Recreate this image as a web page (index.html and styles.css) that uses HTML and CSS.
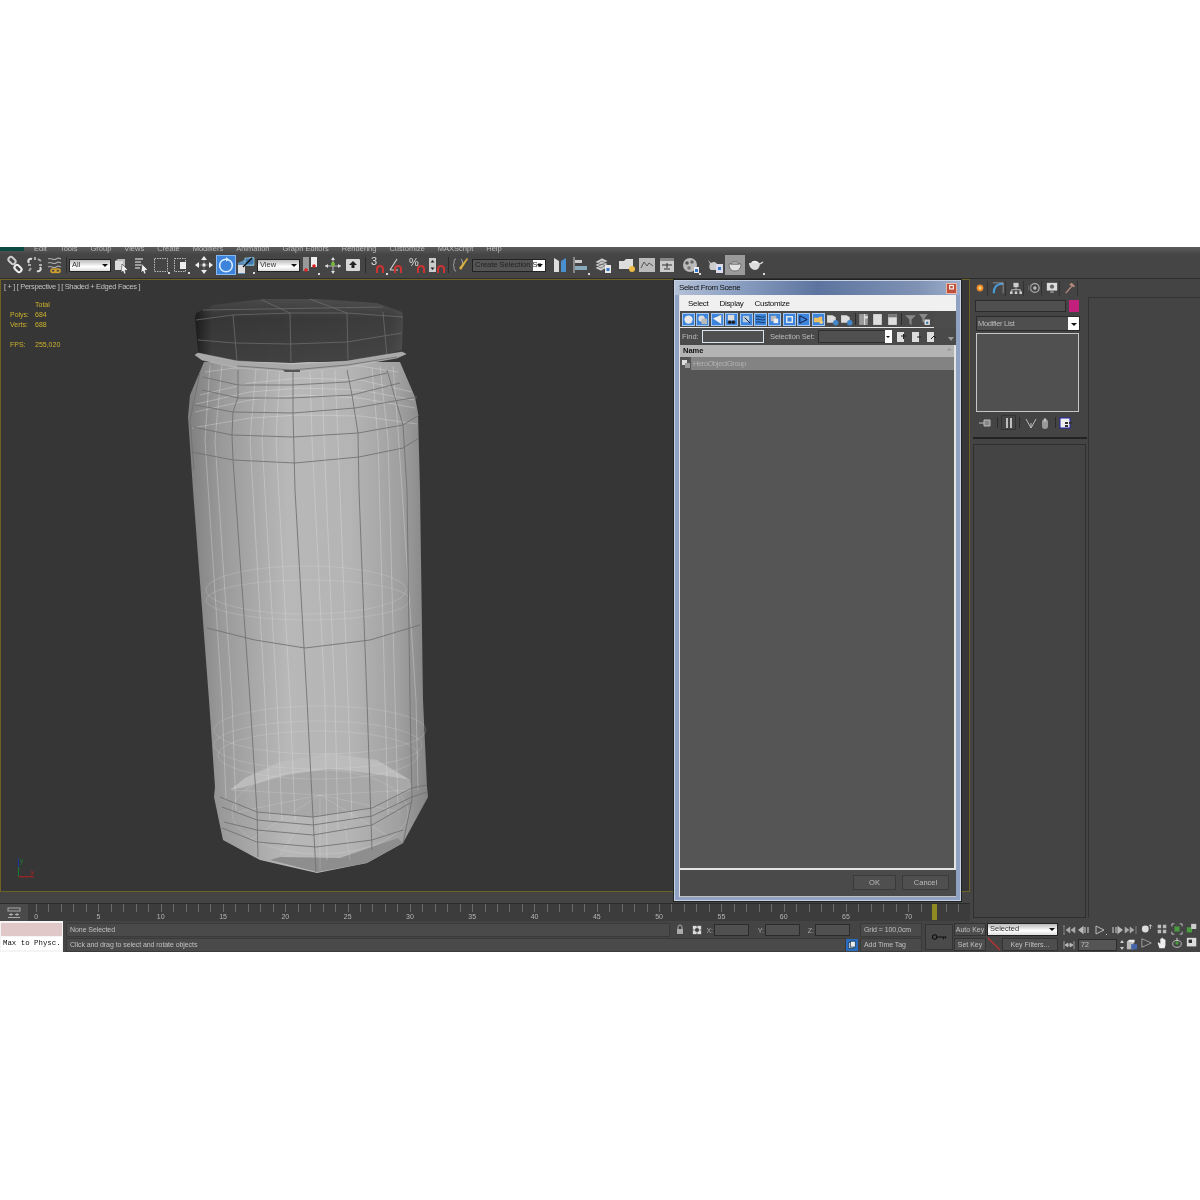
FILE: index.html
```html
<!DOCTYPE html>
<html lang="en">
<head>
<meta charset="utf-8">
<title>Select From Scene</title>
<link rel="stylesheet" href="styles.css">
</head>
<body>
<div class="app">
  <div class="menubar">
    <div class="logo"></div>
    <span>Edit</span><span>Tools</span><span>Group</span><span>Views</span><span>Create</span><span>Modifiers</span><span>Animation</span><span>Graph Editors</span><span>Rendering</span><span>Customize</span><span>MAXScript</span><span>Help</span>
  </div>

  <div class="toolbar">
    <i class="ti"><svg viewBox="0 0 20 20"><g fill="none" stroke="#ccc" stroke-width="2"><rect x="3" y="3" width="8" height="5" rx="2.5" transform="rotate(45 7 5.5)"/><rect x="9" y="11" width="8" height="5" rx="2.5" transform="rotate(45 13 13.5)" stroke="#eee"/></g></svg></i>
    <i class="ti"><svg viewBox="0 0 20 20"><g fill="none" stroke="#aaa" stroke-width="2"><path d="M4 8c-2-3 1-5 3-4M15 12c2 3-1 5-3 4" stroke="#ddd"/><path d="M6 13l-2 3M13 4l3 2M10 2v3M17 10h-3M3 10h3"/></g></svg></i>
    <i class="ti"><svg viewBox="0 0 20 20"><g fill="none" stroke="#aaa" stroke-width="1.2"><path d="M3 4c3-2 5 2 8 0s3-1 5 0M3 8c3-2 5 2 8 0s3-1 5 0M3 12c3-2 5 2 8 0s3-1 5 0"/></g><g fill="none" stroke="#d0a030" stroke-width="1.6"><rect x="6" y="14" width="5" height="3.4" rx="1.7"/><rect x="10" y="14" width="5" height="3.4" rx="1.7"/></g></svg></i>
    <div class="tsep tsep-a"></div>
    <div class="drop drop-all"><span>All</span><b></b></div>
    <i class="ti"><svg viewBox="0 0 20 20"><path d="M4 6l3-2h7v9l-2 2H4z" fill="#bbb"/><path d="M4 6h8v9H4z" fill="#ddd"/><path d="M11 9l6 6-3 .4 1 3-2 .6-1-3-2 2z" fill="#eee" stroke="#222" stroke-width=".5"/></svg></i>
    <i class="ti"><svg viewBox="0 0 20 20"><path d="M4 4h8M4 7h6M4 10h8M4 13h5" stroke="#bbb" stroke-width="1.6"/><path d="M11 9l6 6-3 .4 1 3-2 .6-1-3-2 2z" fill="#eee" stroke="#222" stroke-width=".5"/></svg></i>
    <i class="ti"><svg viewBox="0 0 20 20"><rect x="3.5" y="3.5" width="13" height="13" fill="none" stroke="#bbb" stroke-dasharray="1.5 1"/><path d="M17 17h2v2h-2z" fill="#ddd"/></svg></i>
    <i class="ti"><svg viewBox="0 0 20 20"><rect x="3.5" y="3.5" width="11" height="13" fill="none" stroke="#bbb" stroke-dasharray="1.5 1"/><path d="M9 7h6v7H9z" fill="#eee"/><path d="M17 17h2v2h-2z" fill="#ddd"/></svg></i>
    <div class="tgap3"></div>
    <i class="ti"><svg viewBox="0 0 20 20"><path d="M10 3v14M3 10h14" stroke="#777"/><path d="M10 1l3 4H7zM10 19l3-4H7zM1 10l4-3v6zM19 10l-4-3v6z" fill="#eee"/><rect x="8.5" y="8.5" width="3" height="3" fill="#eee"/></svg></i>
    <div class="tgap2"></div>
    <i class="ti ti-on"><svg viewBox="0 0 20 20"><circle cx="10" cy="10.5" r="6.3" fill="none" stroke="#d9ecff" stroke-width="1.6"/><path d="M10 2l3 2.4-3 2.2z" fill="#d9ecff"/></svg></i>
    <i class="ti"><svg viewBox="0 0 20 20"><path d="M2 8L14 2h4v9H9v8H2z" fill="#5b8db8"/><rect x="2" y="10" width="7" height="8" fill="#ddd"/><rect x="9" y="3" width="9" height="7" fill="#3d78b0" stroke="#cfe" stroke-width=".5"/><path d="M7 12l9-9" stroke="#111" stroke-width="1.4"/><path d="M17 17h2v2h-2z" fill="#ddd"/></svg></i>
    <div class="drop drop-view"><span>View</span><b></b></div>
    <i class="ti"><svg viewBox="0 0 20 20"><rect x="3" y="2" width="6" height="14" fill="#999"/><rect x="11" y="2" width="6" height="10" fill="#eee"/><circle cx="6" cy="15" r="1.8" fill="#d22"/><circle cx="14" cy="11" r="1.8" fill="#d22"/><path d="M18 18h2v2h-2z" fill="#ddd"/></svg></i>
    <div class="tgap3"></div>
    <i class="ti"><svg viewBox="0 0 20 20"><path d="M10 3v14M2 11h16" stroke="#bbb"/><path d="M10 2l2 3H8zM10 19l2-3H8zM2 11l3-2v4zM18 11l-3-2v4z" fill="#ddd"/><circle cx="10" cy="9" r="2" fill="#7b3"/></svg></i>
    <i class="ti"><svg viewBox="0 0 20 20"><rect x="3" y="4" width="14" height="12" rx="1" fill="#d8d8d8"/><path d="M10 6l4 4h-2.5v3h-3v-3H6z" fill="#222"/></svg></i>
    <div class="tsep tsep-b"></div>
    <i class="ti"><svg viewBox="0 0 20 20"><text x="3" y="10" class="svgnum">3</text><path d="M9 18v-4a3 3 0 0 1 6 0v4" fill="none" stroke="#c33" stroke-width="2"/><path d="M18 18h2v2h-2z" fill="#ddd"/></svg></i>
    <i class="ti"><svg viewBox="0 0 20 20"><path d="M2 15L9 4M2 15h8" stroke="#ccc" stroke-width="1.2" fill="none"/><path d="M7 18v-4a3 3 0 0 1 6 0v4" fill="none" stroke="#c33" stroke-width="2"/></svg></i>
    <i class="ti"><svg viewBox="0 0 20 20"><text x="1" y="11" class="svgnum">%</text><path d="M10 18v-4a3 3 0 0 1 6 0v4" fill="none" stroke="#c33" stroke-width="2"/></svg></i>
    <i class="ti"><svg viewBox="0 0 20 20"><rect x="1" y="3" width="7" height="14" fill="#ccc"/><path d="M4.500 5l2 2.500h-4zM4.500 15l2-2.500h-4z" fill="#222"/><path d="M10 18v-4a3 3 0 0 1 6 0v4" fill="none" stroke="#c33" stroke-width="2"/></svg></i>
    <div class="tsep tsep-c"></div>
    <i class="ti"><svg viewBox="0 0 20 20"><path d="M6 4C3 4 5 9 3 10c2 1 0 6 3 6M11 4c2 1 1 5 2 6" fill="none" stroke="#aaa"/><path d="M9 13l8-10 1 1-7 11z" fill="#d8b040"/></svg></i>
    <div class="drop drop-set"><span>Create Selection Se</span><b></b></div>
    <div class="tgap4"></div>
    <i class="ti"><svg viewBox="0 0 20 20"><path d="M4 3l5 3v11H4z" fill="#ddd"/><path d="M16 3l-5 3v11h5z" fill="#4a8fd0"/></svg></i>
    <i class="ti"><svg viewBox="0 0 20 20"><path d="M4 2v16" stroke="#ccc"/><rect x="5" y="5" width="7" height="3" fill="#ccc"/><rect x="5" y="11" width="12" height="4" fill="#8ab"/><path d="M18 18h2v2h-2z" fill="#ddd"/></svg></i>
    <div class="tgap3"></div>
    <i class="ti"><svg viewBox="0 0 20 20"><path d="M2 7l7-4 6 3-7 4zM2 10l7-4 6 3-7 4zM2 13l7-4 6 3-7 4z" fill="#ccc" stroke="#333" stroke-width=".5"/><rect x="12" y="10" width="6" height="8" fill="#e8e8e8"/><rect x="13.500" y="13" width="3" height="3" fill="#37c"/></svg></i>
    <div class="tgap4"></div>
    <i class="ti"><svg viewBox="0 0 20 20"><path d="M2 6h5l2-2h7v10H2z" fill="#ddd"/><circle cx="15" cy="14" r="3" fill="#eebb44"/></svg></i>
    <i class="ti"><svg viewBox="0 0 20 20"><rect x="2" y="3" width="16" height="14" fill="#bbb"/><path d="M4 13l3-6 3 4 2-3 4 3" fill="none" stroke="#555"/></svg></i>
    <i class="ti"><svg viewBox="0 0 20 20"><rect x="3" y="3" width="14" height="14" fill="#ccc"/><rect x="3" y="3" width="14" height="3" fill="#888"/><path d="M5 10h10M10 8v5M7 14h6" stroke="#333"/></svg></i>
    <div class="tgap4"></div>
    <i class="ti"><svg viewBox="0 0 20 20"><circle cx="9" cy="10" r="7" fill="#bbb"/><circle cx="6" cy="8" r="1.800" fill="#555"/><circle cx="11" cy="7" r="1.800" fill="#666"/><circle cx="8" cy="13" r="1.800" fill="#777"/><rect x="13" y="12" width="5" height="6" fill="#eee"/><rect x="14" y="14" width="3" height="3" fill="#37c"/><path d="M18 18h2v2h-2z" fill="#ddd"/></svg></i>
    <div class="tgap4"></div>
    <i class="ti"><svg viewBox="0 0 20 20"><path d="M3 5l3 3c3-2 5-1 6 1v6H6C4 14 4 10 5 9z" fill="#ccc"/><rect x="11" y="9" width="7" height="9" fill="#dde"/><rect x="13" y="12" width="3" height="3" fill="#37c"/></svg></i>
    <i class="ti ti-lit"><svg viewBox="0 0 20 20"><path d="M4 9h12c0 4-2 7-6 7s-6-3-6-7z" fill="#e2e2e2" stroke="#555" stroke-width=".7"/><path d="M6 9c1-3 7-3 8 0z" fill="#ccc" stroke="#555" stroke-width=".7"/></svg></i>
    <i class="ti"><svg viewBox="0 0 20 20"><path d="M4 8h11c0 4-2 7-5 7s-6-3-6-7z" fill="#ddd"/><path d="M6 8c1-3 6-3 8 0z" fill="#eee"/><path d="M15 9l3-2" stroke="#ddd" stroke-width="1.500"/><path d="M18 18h2v2h-2z" fill="#ddd"/></svg></i>
  </div>

  <div class="workspace">
    <div class="leftcol">
      <div class="viewport">
        <svg class="scene" viewBox="0 279 970 612">
          <defs>
            <linearGradient id="bodyfill" gradientUnits="userSpaceOnUse" x1="188" y1="0" x2="428" y2="0">
              <stop offset="0" stop-color="#7f7f7f"/><stop offset=".14" stop-color="#9a9a9a"/><stop offset=".42" stop-color="#b8b8b8"/><stop offset=".68" stop-color="#b4b4b4"/><stop offset=".88" stop-color="#a0a0a0"/><stop offset="1" stop-color="#858585"/>
            </linearGradient>
            <linearGradient id="lidfill" x1="0" y1="0" x2="0" y2="1">
              <stop offset="0" stop-color="#4f4f4f"/><stop offset=".3" stop-color="#3c3c3c"/><stop offset="1" stop-color="#454545"/>
            </linearGradient>
            <linearGradient id="lidside" x1="0" y1="0" x2="1" y2="0">
              <stop offset="0" stop-color="#000" stop-opacity=".55"/><stop offset=".08" stop-color="#000" stop-opacity=".1"/><stop offset=".9" stop-color="#000" stop-opacity="0"/><stop offset="1" stop-color="#fff" stop-opacity=".06"/>
            </linearGradient>
          </defs>
          <polygon class="body" points="204,362 190,395 188,417 193,490 209,700 215,787 214,797 223,840 260,860 317,873 367,863 403,843 428,797 427,787 423,700 420,490 418,413 415,397 400,362"/>
          <polygon fill="#bcbcbc" points="230,790 245,778 280,762 328,753 377,760 410,780 367,773 328,769 287,775 245,787"/>
          <polygon fill="#a8a8a8" points="245,787 287,775 328,769 367,773 410,780 412,790 372,808 313,817 257,812"/>
          <polygon fill="#8e8e8e" points="270,860 317,872 367,863 403,843 398,838 340,858 280,857"/>
          <g class="wl">
            <polyline points="210,365 205,440 222,700 226,800"/><polyline points="222,365 215,440 232,700 236,810"/><polyline points="256,368 250,440 265,700 270,820"/><polyline points="268,368 262,440 277,700 282,820"/><polyline points="280,368 276,440 290,700 295,820"/>
            <polyline points="310,370 312,440 325,700 327,860"/><polyline points="322,370 324,440 335,700 338,830"/><polyline points="335,370 338,440 348,700 352,820"/><polyline points="372,368 378,440 385,700 388,815"/><polyline points="380,366 388,440 395,700 398,805"/><polyline points="393,366 398,430 416,700 418,790"/>
            <polyline points="205,372 250,366 300,364 360,366 398,372"/><polyline points="200,395 250,383 300,378 360,380 412,392"/><polyline points="196,404 250,392 300,388 360,390 414,400"/><polyline points="195,412 250,400 300,395 360,398 415,408"/><polyline points="192,428 250,418 300,415 360,416 417,424"/>
          </g>
          <g class="wf">
            <ellipse cx="306" cy="590" rx="100" ry="24"/><ellipse cx="308" cy="600" rx="102" ry="20"/>
            <ellipse cx="318" cy="755" rx="100" ry="24"/><ellipse cx="318" cy="745" rx="104" ry="24"/><ellipse cx="320" cy="730" rx="106" ry="24"/>
            <ellipse cx="320" cy="812" rx="88" ry="42"/>
            <path d="M238 812L320 795L400 812M250 840L320 795L388 836M320 795V870M232 790L320 795L410 790M280 855L300 825M350 860L345 825"/>
          </g>
          <g class="dl">
            <polyline points="203,377 238,385 292,385 347,382 387,373"/><polyline points="202,390 238,398 292,398 352,395 400,383"/><polyline points="195,405 233,412 293,413 355,408 417,397"/><polyline points="193,427 232,435 293,437 358,433 403,425 419,415"/><polyline points="192,452 233,460 295,463 359,457 403,448 419,438"/>
            <polyline points="207,628 255,640 305,648 370,640 420,625"/>
            <polyline points="220,797 257,812 313,817 372,808 412,788 427,785"/><polyline points="222,807 257,820 313,825 372,816 412,797 427,792"/><polyline points="224,822 257,830 313,835 372,825 412,802"/><polyline points="222,828 257,842 316,847 372,840 403,830"/>
            <polyline points="238,370 238,397 233,412 232,435 233,460 250,700 257,812 258,857"/><polyline points="293,370 293,413 295,490 307,700 313,817 316,872"/><polyline points="347,370 352,395 358,433 359,490 367,700 372,850"/><polyline points="387,370 403,425 407,490 410,700 412,800 403,843"/>
            <polyline points="200,372 190,420 194,470"/>
          </g>
          <polygon fill="url(#lidfill)" points="195,318 196,313 213,305 263,299 317,299 377,303 402,312 403,317 402,350 373,358 292,363 237,361 198,353"/>
          <polygon fill="url(#lidside)" points="195,318 196,313 213,305 263,299 317,299 377,303 402,312 403,317 402,350 373,358 292,363 237,361 198,353"/>
          <g class="ll">
            <polyline points="196,320 233,315 290,313 347,313 403,317"/><polyline points="198,340 235,343 290,344 347,342 402,333"/><polyline points="233,315 237,361"/><polyline points="290,313 291,362"/><polyline points="347,313 348,360"/><polyline points="383,312 387,357"/><polyline points="262,300 290,313"/><polyline points="310,299 347,313"/><polyline points="203,310 383,307"/>
          </g>
          <polygon class="ring" points="195,355 198,353 237,361 292,364 347,361 402,352 406,354 397,358 347,367 292,372 237,368 202,360"/>
          <polyline class="dl" points="237,366 292,370 347,365 397,357"/>
          <polygon fill="#555" points="283,370 300,370 300,372 285,372"/>
        </svg>
        <div class="vp-label">[ + ] [ Perspective ] [ Shaded + Edged Faces ]</div>
        <div class="stats">
          <span></span><span>Total</span>
          <span>Polys:</span><span>684</span>
          <span>Verts:</span><span>688</span>
          <span class="blank"></span><span class="blank"></span>
          <span>FPS:</span><span>255,020</span>
        </div>
        <svg class="axes" viewBox="0 0 24 24"><path d="M6 4v17" stroke="#1a7a30"/><path d="M6 4v8" stroke="#2030a0"/><path d="M6 21h14" stroke="#b02020"/><text x="17" y="19" class="ax ax-x">x</text><text x="7" y="8" class="ax ax-y">y</text></svg>
      </div>
      <div class="tlgap"></div>
      <div class="timeline">
        <div class="tl-btn"><svg viewBox="0 0 14 12"><rect x="1" y="1" width="12" height="3" fill="none" stroke="#aaa"/><path d="M4 6v3M10 6v3M2 7.500h4M8 7.500h4M1 10.500h12" stroke="#aaa"/></svg></div>
        <div class="tl-track">
          <div class="tl-labels"><span>0</span><span>5</span><span>10</span><span>15</span><span>20</span><span>25</span><span>30</span><span>35</span><span>40</span><span>45</span><span>50</span><span>55</span><span>60</span><span>65</span><span>70</span></div>
          <div class="tl-mark"></div>
        </div>
      </div>
    </div>

    <div class="rightpanel">
      <div class="cmd">
        <div class="tabs">
          <i class="tab"><svg viewBox="0 0 14 14"><circle cx="7" cy="7" r="4" fill="#e8862a"/><circle cx="7" cy="7" r="2" fill="#f6d070"/></svg></i>
          <i class="tab"><svg viewBox="0 0 14 14"><path d="M2 13C2 6 6 2 13 2" fill="none" stroke="#4a9ad8" stroke-width="2.400"/><path d="M1 1h12v12" fill="none" stroke="#ccc" stroke-width=".6"/></svg></i>
          <i class="tab"><svg viewBox="0 0 14 14"><rect x="4" y="1" width="6" height="5" fill="#ccc"/><path d="M7 6v3M2 12V9h10v3" fill="none" stroke="#ccc"/><rect x="0" y="11" width="3" height="3" fill="#ccc"/><rect x="5.500" y="11" width="3" height="3" fill="#ccc"/><rect x="11" y="11" width="3" height="3" fill="#ccc"/></svg></i>
          <i class="tab"><svg viewBox="0 0 14 14"><circle cx="8" cy="7" r="5" fill="none" stroke="#aaa" stroke-width="1.500"/><circle cx="8" cy="7" r="2" fill="#bbb"/><path d="M1 4v6M3 3v8" stroke="#777"/></svg></i>
          <i class="tab"><svg viewBox="0 0 14 14"><rect x="1" y="1" width="12" height="9" fill="#ddd"/><circle cx="7" cy="5.500" r="2.500" fill="#666"/><path d="M5 11h4v1.500H5z" fill="#aaa"/></svg></i>
          <i class="tab"><svg viewBox="0 0 14 14"><path d="M2 13l7-8" stroke="#b58a7a" stroke-width="1.500"/><path d="M6 3l3-2 4 4-2 1-2-1z" fill="#b58a7a"/></svg></i>
        </div>
        <div class="namerow"><div class="namefield"></div><div class="swatch"></div></div>
        <div class="modlist"><span>Modifier List</span><b></b></div>
        <div class="stack"></div>
        <div class="stackbtns">
          <svg viewBox="0 0 14 12"><path d="M1 6h5M6 3h6v6H6z" stroke="#bbb" fill="#888"/></svg>
          <div class="sb-sep sb-a"></div>
          <div class="sb-on"><svg viewBox="0 0 14 12"><path d="M5 1v10M9 1v10" stroke="#ccc" stroke-width="1.800"/></svg></div>
          <div class="sb-sep sb-b"></div>
          <svg viewBox="0 0 14 12"><path d="M2 2l5 9 5-9M7 11V6" stroke="#bbb" fill="none"/></svg>
          <svg viewBox="0 0 14 12"><path d="M4 5a3 3 0 0 1 6 0v4a3 3 0 0 1-6 0z" fill="#999"/><path d="M7 1v4" stroke="#ddd"/></svg>
          <div class="sb-sep"></div>
          <svg viewBox="0 0 14 12"><rect x="1" y="1" width="10" height="10" fill="#eee" stroke="#22a"/><rect x="6" y="5" width="3" height="2" fill="#333"/><rect x="6" y="8" width="3" height="2" fill="#333"/><rect x="10" y="5" width="3" height="2" fill="#333"/></svg>
        </div>
        <div class="cmd-rule"></div>
        <div class="lowerpanel"></div>
      </div>
      <div class="sidepanel"></div>
    </div>
  </div>

  <div class="bottom">
    <div class="script">
      <div class="script-pink"></div>
      <div class="script-text">Max to Physc.</div>
    </div>
    <div class="status">
      <div class="srow">
        <div class="sfield sf-none">None Selected</div>
        <svg class="lock" viewBox="0 0 10 12"><path d="M3 5V3a2 2 0 0 1 4 0v2" fill="none" stroke="#aaa"/><rect x="2" y="5" width="6" height="5" fill="#aaa"/></svg>
        <svg class="iso" viewBox="0 0 12 12"><rect x="1" y="1" width="10" height="10" fill="#ddd"/><circle cx="6" cy="6" r="2.500" fill="#444"/><path d="M6 1v2M6 9v2M1 6h2M9 6h2" stroke="#444"/></svg>
        <label class="xlab xl-x">X:</label><div class="xfield"></div>
        <label class="xlab xl-y">Y:</label><div class="xfield"></div>
        <label class="xlab xl-z">Z:</label><div class="xfield"></div>
        <div class="sfield sf-grid">Grid = 100,0cm</div>
      </div>
      <div class="srow">
        <div class="sfield sf-hint">Click and drag to select and rotate objects</div>
        <div class="tagbtn"><svg viewBox="0 0 12 12"><rect x="2" y="3" width="6" height="7" fill="#ddd" stroke="#246"/><rect x="4" y="1.500" width="6" height="7" fill="#eee" stroke="#246"/></svg></div>
        <div class="sfield sf-grid">Add Time Tag</div>
      </div>
    </div>
    <div class="keybtn"><svg viewBox="0 0 22 10"><circle cx="5" cy="5" r="3" fill="none" stroke="#111" stroke-width="1.500"/><path d="M8 5h13M17 5v3M20 5v2" stroke="#111" stroke-width="1.500"/></svg></div>
    <div class="keycol">
      <div class="kbtn">Auto Key</div>
      <div class="kbtn">Set Key</div>
    </div>
    <div class="keycol2">
      <div class="drop drop-sel"><span>Selected</span><b></b></div>
      <div class="kf-row">
        <svg viewBox="0 0 14 14"><path d="M1 1l12 12" stroke="#c03030" stroke-width="1.200"/></svg>
        <div class="kbtn kf">Key Filters...</div>
      </div>
    </div>
    <div class="play">
      <div class="prow">
        <svg viewBox="0 0 14 10"><path d="M2 1v8M1 1h2M1 9h2M8 2L4 5l4 3zM13 2L9 5l4 3z" fill="#aaa" stroke="#aaa" stroke-width=".6"/></svg>
        <svg viewBox="0 0 14 10"><path d="M5 2L1 5l4 3zM7 2v6M10 2v6" stroke="#bbb" fill="#bbb" stroke-width="1.200"/></svg>
        <svg viewBox="0 0 14 10"><path d="M3 1l8 4-8 4z" fill="none" stroke="#bbb"/><path d="M13 9h1v1h-1z" fill="#ccc"/></svg>
        <svg viewBox="0 0 14 10"><path d="M9 2l4 3-4 3zM7 2v6M4 2v6" stroke="#bbb" fill="#bbb" stroke-width="1.200"/></svg>
        <svg viewBox="0 0 14 10"><path d="M12 1v8M1 2l4 3-4 3zM6 2l4 3-4 3z" fill="#aaa" stroke="#aaa" stroke-width=".6"/></svg>
      </div>
      <div class="prow prow2">
        <svg viewBox="0 0 14 10"><path d="M2 1v8M12 1v8M3 5h8M6 3L3 5l3 2zM8 3l3 2-3 2z" stroke="#bbb" fill="#bbb" stroke-width=".7"/></svg>
        <div class="framefield">72</div>
        <div class="spin"><svg viewBox="0 0 6 12"><path d="M3 1l2 3H1zM3 11L1 8h4z" fill="#ccc"/></svg></div>
        <svg class="cfg" viewBox="0 0 14 14"><rect x="1" y="3" width="8" height="9" fill="#bbb"/><path d="M6 6h7v6H6z" fill="#46a"/><path d="M1 3l3-2h6v3" fill="#eee"/></svg>
      </div>
    </div>
    <div class="nav">
      <svg viewBox="0 0 14 14"><circle cx="5" cy="7" r="4" fill="#ddd"/><path d="M11 2v5M9 4l2-2 2 2" stroke="#ccc" fill="none"/></svg>
      <svg viewBox="0 0 14 14"><path d="M2 2h4v4H2zM8 2h4v4H8zM2 8h4v4H2zM8 8h4v4H8z" fill="#bbb"/></svg>
      <svg viewBox="0 0 14 14"><rect x="4" y="4" width="6" height="6" fill="#4a9a40"/><path d="M1 4V1h3M10 1h3v3M1 10v3h3M13 10v3h-3" stroke="#ccc" fill="none"/></svg>
      <svg viewBox="0 0 14 14"><rect x="1" y="5" width="6" height="6" fill="#4a9a40"/><rect x="6" y="1" width="6" height="6" fill="#ccc"/></svg>
      <svg viewBox="0 0 14 14"><path d="M1 2l11 5-11 5z" fill="none" stroke="#aaa"/></svg>
      <svg viewBox="0 0 14 14"><path d="M4 13L2 7l1-1 2 2V2h1.500v5V1H8v6V2h1.500v5V3H11v7l-1 3z" fill="#eee"/></svg>
      <svg viewBox="0 0 14 14"><ellipse cx="7" cy="8" rx="5" ry="4" fill="none" stroke="#ccc"/><circle cx="7" cy="7" r="2" fill="#4a9a40"/><path d="M7 1v3" stroke="#eee"/></svg>
      <svg viewBox="0 0 14 14"><rect x="1" y="1" width="11" height="10" fill="#ddd"/><rect x="3" y="3" width="4" height="4" fill="#333"/></svg>
    </div>
  </div>

  <div class="dialog">
    <div class="dlg-title"><span>Select From Scene</span><div class="dlg-close"><svg viewBox="0 0 10 8"><rect x="3" y="1.500" width="4" height="4" fill="none" stroke="#fff" stroke-width="1.200"/></svg></div></div>
    <div class="dlg-client">
      <div class="dlg-menu"><span>Select</span><span>Display</span><span>Customize</span></div>
      <div class="dlg-tools">
        <i class="db on"><svg viewBox="0 0 12 12"><circle cx="6" cy="6" r="4.500" fill="#e8e8e8"/></svg></i>
        <i class="db on"><svg viewBox="0 0 12 12"><circle cx="5" cy="5" r="3.500" fill="#ddd"/><rect x="5" y="5" width="6" height="6" fill="#bbb"/></svg></i>
        <i class="db on"><svg viewBox="0 0 12 12"><path d="M1 5l9-4v10z" fill="#eee"/><path d="M8 1l2 2" stroke="#eb3"/></svg></i>
        <i class="db on"><svg viewBox="0 0 12 12"><rect x="2" y="1" width="7" height="6" fill="#ddd"/><circle cx="4" cy="9" r="2" fill="#222"/><circle cx="8" cy="9" r="2" fill="#222"/></svg></i>
        <i class="db on"><svg viewBox="0 0 12 12"><rect x="2" y="2" width="7" height="7" fill="#bcd"/><path d="M4 4l6 6" stroke="#113"/></svg></i>
        <i class="db on"><svg viewBox="0 0 12 12"><path d="M1 3c3-2 6 2 10 0M1 6c3-2 6 2 10 0M1 9c3-2 6 2 10 0" stroke="#135" fill="none"/></svg></i>
        <i class="db on"><svg viewBox="0 0 12 12"><rect x="2" y="2" width="6" height="6" fill="#bbb"/><rect x="5" y="5" width="5" height="5" fill="#eee"/></svg></i>
        <i class="db on"><svg viewBox="0 0 12 12"><rect x="3" y="3" width="6" height="6" fill="none" stroke="#eee" stroke-width="1.500"/></svg></i>
        <i class="db on"><svg viewBox="0 0 12 12"><path d="M2 2l8 4-8 4z" fill="none" stroke="#113"/></svg></i>
        <i class="db on db-hi"><svg viewBox="0 0 12 12"><path d="M1 4h5l1-1h3v6H1z" fill="#f0c060"/><circle cx="9" cy="9" r="2" fill="#ec8"/></svg></i>
        <i class="db"><svg viewBox="0 0 12 12"><path d="M1 2h5l3 2v5H1z" fill="#ddd"/><circle cx="9" cy="9" r="2.500" fill="#48c"/></svg></i>
        <i class="db"><svg viewBox="0 0 12 12"><path d="M1 2h5l3 2v5H1z" fill="#ddd"/><circle cx="9" cy="9" r="2.500" fill="#48c"/></svg></i>
        <b class="db-sep"></b>
        <i class="db"><svg viewBox="0 0 12 12"><rect x="2" y="1" width="8" height="10" fill="#999"/><path d="M7 1v10" stroke="#ddd"/><rect x="7" y="3" width="3" height="2" fill="#ddd"/></svg></i>
        <i class="db"><svg viewBox="0 0 12 12"><rect x="2" y="1" width="8" height="10" fill="#ddd"/></svg></i>
        <i class="db"><svg viewBox="0 0 12 12"><rect x="2" y="1" width="8" height="10" fill="#ddd"/><rect x="2" y="1" width="8" height="3" fill="#777"/></svg></i>
        <b class="db-sep db-sep2"></b>
        <i class="db"><svg viewBox="0 0 12 12"><path d="M1 2h10L7 6v5L5 10V6z" fill="#888"/></svg></i>
        <i class="db"><svg viewBox="0 0 12 12"><path d="M1 1h8L6 5v4L4 8V5z" fill="#888"/><rect x="6" y="6" width="5" height="5" fill="#ddd"/><rect x="7.500" y="8" width="2" height="2" fill="#37a"/></svg></i>
      </div>
      <div class="dlg-find">
        <label class="find-l">Find:</label>
        <div class="find-in"></div>
        <label class="find-s">Selection Set:</label>
        <div class="find-drop"><b></b></div>
        <div class="find-icons">
          <svg viewBox="0 0 10 12"><rect x="1" y="1" width="7" height="10" fill="#ddd"/><path d="M5 5h5M7.500 3v5" stroke="#222"/></svg>
          <svg viewBox="0 0 10 12"><rect x="1" y="1" width="7" height="10" fill="#ddd"/><path d="M6 6h4" stroke="#222"/></svg>
          <svg viewBox="0 0 10 12"><rect x="1" y="1" width="7" height="10" fill="#ddd"/><path d="M5 8l3-3 2 2" stroke="#222" fill="none"/></svg>
        </div>
        <div class="find-more"></div>
      </div>
      <div class="dlg-list">
        <div class="dlg-head"><span>Name</span><em>^</em></div>
        <div class="dlg-row"><svg viewBox="0 0 10 10"><rect x="1" y="1" width="5" height="5" fill="#ddd"/><rect x="4" y="4" width="5" height="5" fill="#999"/></svg><span>HeroObjectGroup</span></div>
      </div>
      <div class="dlg-foot"><div class="dbtn dbtn-ok">OK</div><div class="dbtn dbtn-cancel">Cancel</div></div>
    </div>
  </div>
</div>
</body>
</html>
```
FILE: styles.css
```css
* { box-sizing: border-box; }
html, body { margin: 0; background: #fff; }
body { padding-top: 247px; height: 1200px; font-family: "Liberation Sans", Arial, sans-serif; font-size: 7.500px; color: #c4c4c4; }
svg { display: block; }
i { display: block; font-style: normal; }
.app { position: relative; width: 1200px; height: 705px; background: #444; overflow: hidden; filter: blur(.3px); }

.menubar { height: 8px; display: flex; overflow: hidden; background: linear-gradient(#5c5c5c, #444); color: #bbb; line-height: 4px; }
.menubar span { height: 8px; display: block; margin-left: 13px; }
.logo { width: 24px; height: 4px; background: #0d4a44; margin-right: -3px; }

.toolbar { height: 24px; display: flex; align-items: center; padding: 0 0 3px 5px; background: #454545; border-bottom: 1px solid #2e2e2e; }
.ti { width: 20px; height: 20px; flex: none; }
.ti-on { background: #3c84dc; box-shadow: inset 0 0 0 1px #8ab8ee; }
.ti-lit { background: #9a9a9a; }
.tsep { width: 1px; height: 16px; background: #2c2c2c; flex: none; }
.tsep-a { margin: 0 2px 0 1px; }
.tsep-b { margin: 0 2px 0 2px; }
.tsep-c { margin: 0 1px 0 0; }
.tgap2 { width: 2px; flex: none; }
.tgap3 { width: 3px; flex: none; }
.tgap4 { width: 4px; flex: none; }
.svgnum { font: 11px "Liberation Sans", sans-serif; fill: #ddd; }

.drop { position: relative; height: 13px; flex: none; background: linear-gradient(#bbb, #fff 60%, #ddd); color: #333; border: 1px solid #222; line-height: 10px; padding-left: 2px; font-size: 7.500px; }
.drop b { position: absolute; right: 2px; top: 4px; border: 3px solid transparent; border-top: 3px solid #111; border-bottom: 0; }
.drop-all { width: 42px; }
.drop-view { width: 43px; margin-left: 1px; }
.drop-set { width: 74px; margin-left: 2px; background: linear-gradient(90deg, #555 0, #555 84%, #fff 84%); color: #222; }

.workspace { height: 642px; display: flex; }
.leftcol { width: 970px; flex: none; display: flex; flex-direction: column; }
.viewport { position: relative; height: 613px; background: #363636; border: 1px solid #6f6225; overflow: hidden; }
.scene { position: absolute; left: -1px; top: -1px; width: 970px; height: 612px; }
.body { fill: url(#bodyfill); }
.ring { fill: #a9a9a9; stroke: #cfcfcf; stroke-width: .4; }
.wl { fill: none; stroke: #e6e6e6; stroke-opacity: .34; stroke-width: 1; }
.wf { fill: none; stroke: #e6e6e6; stroke-opacity: .2; stroke-width: 1; }
.dl { fill: none; stroke: #707070; stroke-opacity: .85; stroke-width: 1; }
.ll { fill: none; stroke: #6b6b6b; stroke-width: .8; }
.vp-label { position: absolute; left: 3px; top: 2px; font-size: 7.500px; line-height: 10px; letter-spacing: -.33px; color: #c0c0c0; }
.stats { position: absolute; left: 9px; top: 20px; display: grid; grid-template-columns: 25px auto; grid-auto-rows: 10px; line-height: 10px; font-size: 7px; color: #cdb22c; }
.axes { position: absolute; left: 11px; top: 574px; width: 26px; height: 26px; }
.ax { font: 7px "Liberation Sans", sans-serif; }
.ax-x { fill: #b02020; }
.ax-y { fill: #1a7a30; }

.tlgap { height: 11px; background: #444; }
.timeline { height: 18px; display: flex; background: #3c3c3c; border-top: 1px solid #2b2b2b; }
.tl-btn { width: 28px; flex: none; background: #4a4a4a; display: flex; align-items: center; justify-content: center; }
.tl-btn svg { width: 14px; height: 12px; }
.tl-track { position: relative; flex: 1; background: repeating-linear-gradient(90deg, #6a6a6a 0 1px, transparent 1px 12.46px) 8px 0 / 100% 8px no-repeat; }
.tl-labels { display: flex; padding: 8px 0 0 5px; font-size: 7px; line-height: 9px; color: #b5b5b5; }
.tl-labels span { width: 62.300px; flex: none; text-align: center; transform: translateX(-28px); }
.tl-mark { position: absolute; left: 904px; top: 0; width: 5px; height: 16px; background: #8f8a20; }

.rightpanel { flex: 1; display: flex; background: #444; }
.cmd { width: 118px; flex: none; padding: 2px 0 0 2px; display: flex; flex-direction: column; }
.tabs { display: flex; height: 16px; gap: 3px; padding-left: 1px; }
.tab { width: 15px; height: 15px; padding: 1px; border-right: 1px solid #333; }
.namerow { display: flex; gap: 3px; margin: 3px 0 0 3px; }
.namefield { width: 91px; height: 12px; background: #4f4f4f; border: 1px solid #2b2b2b; }
.swatch { width: 10px; height: 12px; background: #c3207e; }
.modlist { position: relative; width: 104px; height: 15px; margin: 4px 0 0 4px; background: #4e4e4e; border: 1px solid #2b2b2b; line-height: 13px; padding-left: 1px; font-size: 7.500px; letter-spacing: -.3px; color: #bbb; }
.modlist b { position: absolute; right: 0; top: 0; width: 11px; height: 13px; background: #fff; }
.modlist b::after { content: ""; position: absolute; left: 3px; top: 6px; border: 3px solid transparent; border-top: 3px solid #111; border-bottom: 0; }
.stack { width: 103px; height: 79px; margin: 2px 0 0 4px; background: #505050; border: 1px solid #c6c6c6; }
.stackbtns { display: flex; align-items: center; height: 15px; margin: 3px 0 0 6px; }
.stackbtns svg { width: 14px; height: 12px; flex: none; }
.sb-sep { width: 1px; height: 11px; background: #2c2c2c; margin: 0 3px; flex: none; }
.sb-a { margin: 0 3px 0 5px; }
.sb-b { margin: 0 4px 0 3px; }
.sb-on { width: 15px; height: 15px; border: 1px solid #333; display: flex; align-items: center; justify-content: center; flex: none; }
.cmd-rule { height: 2px; width: 114px; margin: 7px 0 0 1px; background: #222; }
.lowerpanel { width: 113px; flex: 1; margin: 5px 0 3px 1px; border: 1px solid #2f2f2f; }
.sidepanel { flex: 1; margin: 18px 0 3px 0; border: 1px solid #333; border-right: 0; border-bottom: 0; }

.bottom { height: 31px; display: flex; background: #444; }
.script { width: 63px; flex: none; padding: 2px 1px; background: #f4f4f4; display: flex; flex-direction: column; gap: 1px; }
.script-pink { height: 13px; background: #e0c8c8; }
.script-text { flex: 1; background: #fff; color: #111; font: 7.400px/13px "Liberation Mono", monospace; padding-left: 2px; white-space: nowrap; overflow: hidden; }
.status { width: 856px; flex: none; margin-left: 3px; display: flex; flex-direction: column; gap: 1px; padding-top: 2px; }
.srow { display: flex; align-items: center; height: 14px; }
.sfield { height: 14px; background: #4a4a4a; border: 1px solid #3a3a3a; line-height: 12px; padding-left: 3px; font-size: 7px; letter-spacing: -.07px; color: #c0c0c0; }
.sf-none { width: 604px; }
.sf-hint { width: 780px; }
.sf-grid { width: 62px; margin-left: auto; }
.lock { width: 10px; height: 12px; margin-left: 5px; }
.iso { width: 10px; height: 10px; margin-left: 7px; }
.xlab { font-size: 7px; color: #aaa; width: 8px; text-align: right; }
.xl-x { margin-left: 3px; }
.xl-y { margin-left: 7px; }
.xl-z { margin-left: 6px; }
.xfield { width: 35px; height: 12px; margin-left: 1px; background: #505050; border: 1px solid #2b2b2b; }
.tagbtn { width: 12px; height: 12px; background: #2a6cc0; padding: 1px; }
.keybtn { width: 28px; height: 26px; margin: 3px 0 0 3px; flex: none; border: 1px solid #333; background: #4a4a4a; display: flex; align-items: center; justify-content: center; }
.keybtn svg { width: 16px; height: 8px; }
.keycol { width: 32px; flex: none; margin: 2px 0 0 1px; display: flex; flex-direction: column; gap: 2px; }
.kbtn { height: 13px; background: #4d4d4d; border: 1px solid #333; line-height: 11px; text-align: center; font-size: 7px; color: #c0c0c0; }
.keycol2 { width: 72px; flex: none; margin: 2px 0 0 1px; display: flex; flex-direction: column; gap: 1px; }
.drop-sel { width: 71px; height: 13px; }
.kf-row { display: flex; align-items: center; gap: 1px; }
.kf-row svg { width: 14px; height: 14px; flex: none; }
.kf { flex: 1; margin-right: 1px; }
.play { width: 79px; flex: none; margin: 3px 0 0 3px; display: flex; flex-direction: column; gap: 3px; }
.prow { display: flex; gap: 1.500px; height: 11px; align-items: center; }
.prow svg { width: 14px; height: 10px; flex: none; }
.prow2 { height: 13px; gap: 0; }
.framefield { width: 39px; height: 12px; margin-left: 2px; background: #555; border: 1px solid #2b2b2b; line-height: 10px; padding-left: 2px; font-size: 7px; color: #c0c0c0; }
.spin { width: 6px; height: 12px; margin-left: 2px; }
.prow .spin svg { width: 6px; height: 12px; }
.prow .cfg { width: 12px; height: 12px; margin-left: 1px; }
.nav { width: 60px; flex: none; margin: 2px 0 0 0; display: grid; grid-template-columns: repeat(4, 15px); grid-auto-rows: 14px; }
.nav svg { width: 12px; height: 12px; }

.dialog { position: absolute; left: 674px; top: 33px; width: 287px; height: 621px; padding: 0 4px 5px 4px; background: #8fa2c4; border: 1px solid #c7d2e4; box-shadow: 0 0 0 1px #222; }
.dlg-title { height: 14px; display: flex; align-items: center; justify-content: space-between; background: linear-gradient(90deg, #b4c0d6 0, #92a5c6 18%, #5c749f 50%, #7f92b4 85%, #9caecb 100%); margin: 0 -4px; padding: 0 3px 2px 4px; color: #111; font-size: 8px; letter-spacing: -.4px; }
.dlg-close { width: 11px; height: 11px; margin-top: 2px; background: #c0503a; border: 1px solid #e9b8a8; }
.dlg-client { height: 602px; display: flex; flex-direction: column; background: #4c4c4c; border-left: 1px solid #e0e0e0; }
.dlg-menu { height: 16px; flex: none; display: flex; align-items: center; gap: 11px; padding-left: 8px; background: #f0f0f0; color: #111; font-size: 8px; letter-spacing: -.3px; }
.dlg-tools { height: 17px; flex: none; display: flex; align-items: center; gap: 1.400px; padding: 0 0 0 2px; background: #4a4a4a; border-bottom: 1px solid #e6e6e6; margin-right: 22px; }
.db { width: 13px; height: 13px; flex: none; }
.db.on { background: #3c84dc; border: 1px solid #a5c8f0; }
.db-hi { background: #3c84dc; }
.db-sep { width: 1px; height: 12px; background: #2c2c2c; flex: none; }
.db-sep2 { margin: 0 .6px; }
.dlg-find { height: 17px; flex: none; display: flex; align-items: center; background: #4a4a4a; font-size: 7.500px; color: #bbb; }
.find-l { margin-left: 2px; width: 20px; }
.find-in { width: 62px; height: 13px; background: #505050; border: 1px solid #d8e4f0; }
.find-s { margin-left: 6px; width: 48px; white-space: nowrap; letter-spacing: -.12px; }
.find-drop { position: relative; width: 74px; height: 13px; background: #505050; border: 1px solid #2e2e2e; }
.find-drop b { position: absolute; right: -1px; top: -1px; width: 7px; height: 13px; background: #fff; }
.find-drop b::after { content: ""; position: absolute; left: 1px; top: 6px; border: 2.500px solid transparent; border-top: 2.500px solid #111; border-bottom: 0; }
.find-icons { display: flex; gap: 5px; margin-left: 4px; }
.find-icons svg { width: 10px; height: 12px; }
.find-more { margin: 4px 0 0 12px; border: 3px solid transparent; border-top: 4px solid #999; border-bottom: 0; }
.dlg-list { flex: none; height: 525px; background: #555; border-right: 2px solid #e4e4e4; border-bottom: 2px solid #e4e4e4; }
.dlg-head { height: 12px; display: flex; justify-content: space-between; align-items: center; padding: 0 3px 1px 3px; background: #b4b4b4; color: #111; font-weight: bold; font-size: 7.500px; }
.dlg-head em { color: #777; font-style: normal; font-weight: normal; }
.dlg-row { height: 13px; display: flex; align-items: center; padding-left: 1px; gap: 2px; background: linear-gradient(90deg, #555 0, #555 11px, #838383 11px); font-size: 7.500px; letter-spacing: -.4px; color: #b0b0b0; }
.dlg-row svg { width: 10px; height: 10px; flex: none; }
.dlg-foot { flex: 1; display: flex; justify-content: flex-end; gap: 6px; padding: 5px 7px 0 0; border-bottom: 1px solid #c0c0c0; background: #4a4a4a; }
.dbtn { height: 15px; background: #4f4f4f; border: 1px solid #3a3a3a; line-height: 13px; text-align: center; font-size: 7.500px; color: #bbb; }
.dbtn-ok { width: 43px; }
.dbtn-cancel { width: 47px; }
```
